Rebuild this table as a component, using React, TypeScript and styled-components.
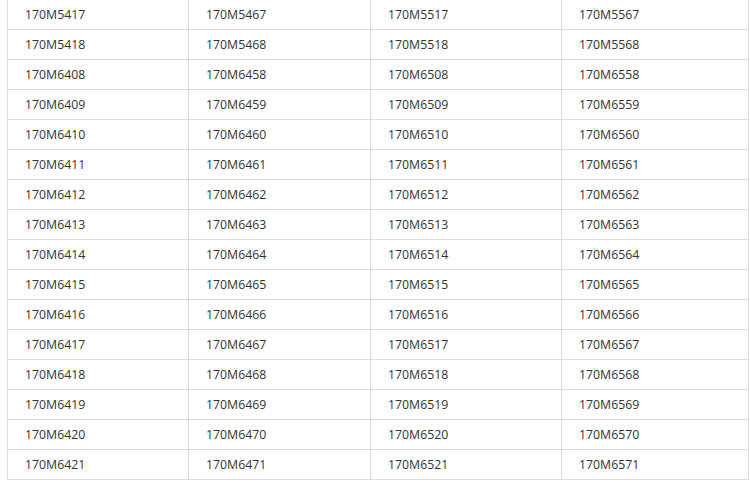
import React from 'react';
import styled, { createGlobalStyle } from 'styled-components';

const GlobalStyle = createGlobalStyle`
  html, body {
    margin: 0;
    padding: 0;
    background: #fff;
  }
  body {
    font-family: "Open Sans", "Noto Sans", Arial, sans-serif;
  }
`;

const PartTable = styled.div`
  display: grid;
  grid-template-columns: 181px 182px 191px 187px;
  width: max-content;
  margin-left: 7px;
  border-right: 1px solid #dcdcdc;
`;

const Cell = styled.div`
  box-sizing: border-box;
  height: 30px;
  line-height: 30px;
  padding: 0 0 0 17px;
  border-left: 1px solid #dcdcdc;
  border-bottom: 1px solid #dcdcdc;
  font-size: 12.3px;
  color: #333;
  white-space: nowrap;
`;

const firstColumn = [5417, 5418, ...Array.from({ length: 14 }, (_, i) => 6408 + i)];
const offsets = [0, 50, 100, 150];

const rows = firstColumn.map((n) => offsets.map((o) => `170M${n + o}`));

export default function App() {
  return (
    <>
      <GlobalStyle />
      <PartTable>
        {rows.map((row) => row.map((part) => <Cell key={part}>{part}</Cell>))}
      </PartTable>
    </>
  );
}
